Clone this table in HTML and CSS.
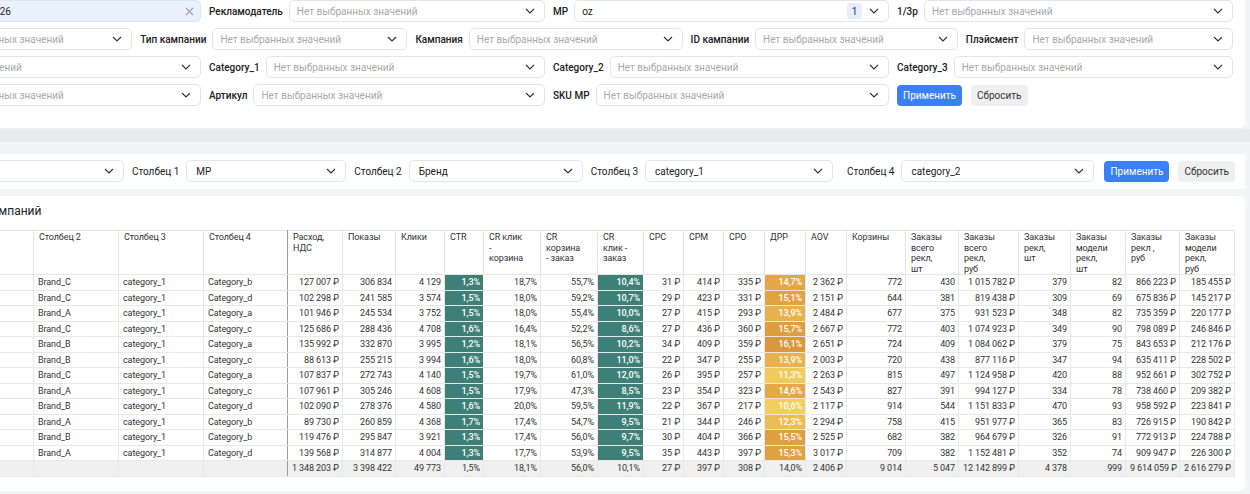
FILE: index.html
```html
<!DOCTYPE html>
<html lang="ru">
<head>
<meta charset="utf-8">
<title>Отчёт</title>
<link rel="stylesheet" href="styles.css">
</head>
<body>
<div class="page">
  <section class="panel filters">
    <div class="frow cols4">
      <div class="field"><span class="lbl lw45">Период</span><div class="sel sel-active"><span class="val">01.01 – 31.01.2026</span><svg class="clear" width="9" height="9" viewBox="0 0 9 9"><path d="M1 1l7 7M8 1L1 8" stroke="#9aa0a6" stroke-width="1.1" fill="none"/></svg></div></div>
      <div class="field"><span class="lbl">Рекламодатель</span><div class="sel"><span class="ph">Нет выбранных значений</span><svg class="chev" width="10" height="6" viewBox="0 0 10 6"><path d="M1 1l4 4 4-4" fill="none" stroke="#333" stroke-width="1.2"/></svg></div></div>
      <div class="field"><span class="lbl">МР</span><div class="sel"><span class="val">oz</span><span class="badge">1</span><svg class="chev chev-b" width="10" height="6" viewBox="0 0 10 6"><path d="M1 1l4 4 4-4" fill="none" stroke="#333" stroke-width="1.2"/></svg></div></div>
      <div class="field"><span class="lbl">1/3р</span><div class="sel"><span class="ph">Нет выбранных значений</span><svg class="chev" width="10" height="6" viewBox="0 0 10 6"><path d="M1 1l4 4 4-4" fill="none" stroke="#333" stroke-width="1.2"/></svg></div></div>
    </div>
    <div class="frow cols5">
      <div class="field"><span class="lbl lw64">Аккаунт</span><div class="sel"><span class="ph">Нет выбранных значений</span><svg class="chev" width="10" height="6" viewBox="0 0 10 6"><path d="M1 1l4 4 4-4" fill="none" stroke="#333" stroke-width="1.2"/></svg></div></div>
      <div class="field"><span class="lbl">Тип кампании</span><div class="sel"><span class="ph">Нет выбранных значений</span><svg class="chev" width="10" height="6" viewBox="0 0 10 6"><path d="M1 1l4 4 4-4" fill="none" stroke="#333" stroke-width="1.2"/></svg></div></div>
      <div class="field"><span class="lbl">Кампания</span><div class="sel"><span class="ph">Нет выбранных значений</span><svg class="chev" width="10" height="6" viewBox="0 0 10 6"><path d="M1 1l4 4 4-4" fill="none" stroke="#333" stroke-width="1.2"/></svg></div></div>
      <div class="field"><span class="lbl">ID кампании</span><div class="sel"><span class="ph">Нет выбранных значений</span><svg class="chev" width="10" height="6" viewBox="0 0 10 6"><path d="M1 1l4 4 4-4" fill="none" stroke="#333" stroke-width="1.2"/></svg></div></div>
      <div class="field"><span class="lbl">Плэйсмент</span><div class="sel"><span class="ph">Нет выбранных значений</span><svg class="chev" width="10" height="6" viewBox="0 0 10 6"><path d="M1 1l4 4 4-4" fill="none" stroke="#333" stroke-width="1.2"/></svg></div></div>
    </div>
    <div class="frow cols4">
      <div class="field"><span class="lbl lw22">Тег</span><div class="sel"><span class="ph">Нет выбранных значений</span><svg class="chev" width="10" height="6" viewBox="0 0 10 6"><path d="M1 1l4 4 4-4" fill="none" stroke="#333" stroke-width="1.2"/></svg></div></div>
      <div class="field"><span class="lbl">Category_1</span><div class="sel"><span class="ph">Нет выбранных значений</span><svg class="chev" width="10" height="6" viewBox="0 0 10 6"><path d="M1 1l4 4 4-4" fill="none" stroke="#333" stroke-width="1.2"/></svg></div></div>
      <div class="field"><span class="lbl">Category_2</span><div class="sel"><span class="ph">Нет выбранных значений</span><svg class="chev" width="10" height="6" viewBox="0 0 10 6"><path d="M1 1l4 4 4-4" fill="none" stroke="#333" stroke-width="1.2"/></svg></div></div>
      <div class="field"><span class="lbl">Category_3</span><div class="sel"><span class="ph">Нет выбранных значений</span><svg class="chev" width="10" height="6" viewBox="0 0 10 6"><path d="M1 1l4 4 4-4" fill="none" stroke="#333" stroke-width="1.2"/></svg></div></div>
    </div>
    <div class="frow cols4">
      <div class="field"><span class="lbl lw64">Оплата</span><div class="sel"><span class="ph">Нет выбранных значений</span><svg class="chev" width="10" height="6" viewBox="0 0 10 6"><path d="M1 1l4 4 4-4" fill="none" stroke="#333" stroke-width="1.2"/></svg></div></div>
      <div class="field"><span class="lbl">Артикул</span><div class="sel"><span class="ph">Нет выбранных значений</span><svg class="chev" width="10" height="6" viewBox="0 0 10 6"><path d="M1 1l4 4 4-4" fill="none" stroke="#333" stroke-width="1.2"/></svg></div></div>
      <div class="field"><span class="lbl">SKU MP</span><div class="sel"><span class="ph">Нет выбранных значений</span><svg class="chev" width="10" height="6" viewBox="0 0 10 6"><path d="M1 1l4 4 4-4" fill="none" stroke="#333" stroke-width="1.2"/></svg></div></div>
      <div class="field"><button class="btn btn-primary">Применить</button><button class="btn btn-secondary">Сбросить</button></div>
    </div>
  </section>

  <div class="band"></div>

  <section class="panel groupbar">
    <div class="gfield g0"><span class="glbl">Строки</span><div class="sel"><span class="val">Неделя</span><svg class="chev" width="10" height="6" viewBox="0 0 10 6"><path d="M1 1l4 4 4-4" fill="none" stroke="#333" stroke-width="1.2"/></svg></div></div>
    <div class="gfield"><span class="glbl">Столбец 1</span><div class="sel w1"><span class="val">МР</span><svg class="chev" width="10" height="6" viewBox="0 0 10 6"><path d="M1 1l4 4 4-4" fill="none" stroke="#333" stroke-width="1.2"/></svg></div></div>
    <div class="gfield"><span class="glbl">Столбец 2</span><div class="sel w2"><span class="val">Бренд</span><svg class="chev" width="10" height="6" viewBox="0 0 10 6"><path d="M1 1l4 4 4-4" fill="none" stroke="#333" stroke-width="1.2"/></svg></div></div>
    <div class="gfield"><span class="glbl">Столбец 3</span><div class="sel w3"><span class="val">category_1</span><svg class="chev" width="10" height="6" viewBox="0 0 10 6"><path d="M1 1l4 4 4-4" fill="none" stroke="#333" stroke-width="1.2"/></svg></div></div>
    <div class="gfield g4"><span class="glbl">Столбец 4</span><div class="sel w4"><span class="val">category_2</span><svg class="chev" width="10" height="6" viewBox="0 0 10 6"><path d="M1 1l4 4 4-4" fill="none" stroke="#333" stroke-width="1.2"/></svg></div></div>
    <div class="gbtns"><button class="btn btn-primary">Применить</button><button class="btn btn-secondary">Сбросить</button></div>
  </section>

  <section class="panel report">
    <h2 class="title">Анализ рекламных кампаний</h2>
    <table class="grid">
      <colgroup>
        <col class="c0"><col class="c85"><col class="c85"><col class="c84">
        <col class="c55"><col class="c53"><col class="c49"><col class="c39"><col class="c57"><col class="c57"><col class="c46">
        <col class="c40"><col class="c40"><col class="c41"><col class="c41"><col class="c41"><col class="c59">
        <col class="c53"><col class="c60"><col class="c52"><col class="c55"><col class="c54"><col class="c55">
      </colgroup>
      <thead>
        <tr>
          <th>Столбец 1</th><th>Столбец 2</th><th>Столбец 3</th><th class="pin">Столбец 4</th>
          <th>Расход,<br>НДС</th><th>Показы</th><th>Клики</th><th>CTR</th>
          <th>CR клик<br>-<br>корзина</th><th>CR<br>корзина<br>- заказ</th><th>CR<br>клик -<br>заказ</th>
          <th>CPC</th><th>CPM</th><th>CPO</th><th>ДРР</th><th>AOV</th><th>Корзины</th>
          <th>Заказы<br>всего<br>рекл,<br>шт</th><th>Заказы<br>всего<br>рекл,<br>руб</th><th>Заказы<br>рекл,<br>шт</th>
          <th>Заказы<br>модели<br>рекл,<br>шт</th><th>Заказы<br>рекл ,<br>руб</th><th>Заказы<br>модели<br>рекл,<br>руб</th>
        </tr>
      </thead>
      <tbody>
        <tr><td class="t">oz</td><td class="t">Brand_C</td><td class="t">category_1</td><td class="t pin">Category_b</td><td>127 007 ₽</td><td>306 834</td><td>4 129</td><td class="hl">1,3%</td><td>18,7%</td><td>55,7%</td><td class="hl">10,4%</td><td>31 ₽</td><td>414 ₽</td><td>335 ₽</td><td class="hw" style="background:#e3a845">14,7%</td><td>2 362 ₽</td><td>772</td><td>430</td><td>1 015 782 ₽</td><td>379</td><td>82</td><td>866 223 ₽</td><td>185 455 ₽</td></tr>
        <tr><td class="t">oz</td><td class="t">Brand_C</td><td class="t">category_1</td><td class="t pin">Category_d</td><td>102 298 ₽</td><td>241 585</td><td>3 574</td><td class="hl">1,5%</td><td>18,0%</td><td>59,2%</td><td class="hl">10,7%</td><td>29 ₽</td><td>423 ₽</td><td>331 ₽</td><td class="hw" style="background:#e1a342">15,1%</td><td>2 151 ₽</td><td>644</td><td>381</td><td>819 438 ₽</td><td>309</td><td>69</td><td>675 836 ₽</td><td>145 217 ₽</td></tr>
        <tr><td class="t">oz</td><td class="t">Brand_A</td><td class="t">category_1</td><td class="t pin">Category_a</td><td>101 946 ₽</td><td>245 534</td><td>3 752</td><td class="hl">1,5%</td><td>18,0%</td><td>55,4%</td><td class="hl">10,0%</td><td>27 ₽</td><td>415 ₽</td><td>293 ₽</td><td class="hw" style="background:#e7b24b">13,9%</td><td>2 484 ₽</td><td>677</td><td>375</td><td>931 523 ₽</td><td>348</td><td>82</td><td>735 359 ₽</td><td>220 177 ₽</td></tr>
        <tr><td class="t">oz</td><td class="t">Brand_C</td><td class="t">category_1</td><td class="t pin">Category_c</td><td>125 686 ₽</td><td>288 436</td><td>4 708</td><td class="hl">1,6%</td><td>16,4%</td><td>52,2%</td><td class="hl">8,6%</td><td>27 ₽</td><td>436 ₽</td><td>360 ₽</td><td class="hw" style="background:#de9d3f">15,7%</td><td>2 667 ₽</td><td>772</td><td>403</td><td>1 074 923 ₽</td><td>349</td><td>90</td><td>798 089 ₽</td><td>246 846 ₽</td></tr>
        <tr><td class="t">oz</td><td class="t">Brand_B</td><td class="t">category_1</td><td class="t pin">Category_a</td><td>135 992 ₽</td><td>332 870</td><td>3 995</td><td class="hl">1,2%</td><td>18,1%</td><td>56,5%</td><td class="hl">10,2%</td><td>34 ₽</td><td>409 ₽</td><td>359 ₽</td><td class="hw" style="background:#db973c">16,1%</td><td>2 651 ₽</td><td>724</td><td>409</td><td>1 084 062 ₽</td><td>379</td><td>75</td><td>843 653 ₽</td><td>212 176 ₽</td></tr>
        <tr><td class="t">oz</td><td class="t">Brand_B</td><td class="t">category_1</td><td class="t pin">Category_c</td><td>88 613 ₽</td><td>255 215</td><td>3 994</td><td class="hl">1,6%</td><td>18,0%</td><td>60,8%</td><td class="hl">11,0%</td><td>22 ₽</td><td>347 ₽</td><td>255 ₽</td><td class="hw" style="background:#e7b24b">13,9%</td><td>2 003 ₽</td><td>720</td><td>438</td><td>877 116 ₽</td><td>347</td><td>94</td><td>635 411 ₽</td><td>228 502 ₽</td></tr>
        <tr><td class="t">oz</td><td class="t">Brand_C</td><td class="t">category_1</td><td class="t pin">Category_a</td><td>107 837 ₽</td><td>272 743</td><td>4 140</td><td class="hl">1,5%</td><td>19,7%</td><td>61,0%</td><td class="hl">12,0%</td><td>26 ₽</td><td>395 ₽</td><td>257 ₽</td><td class="hw" style="background:#f0ca5a">11,3%</td><td>2 263 ₽</td><td>815</td><td>497</td><td>1 124 958 ₽</td><td>420</td><td>88</td><td>952 661 ₽</td><td>302 752 ₽</td></tr>
        <tr><td class="t">oz</td><td class="t">Brand_A</td><td class="t">category_1</td><td class="t pin">Category_c</td><td>107 961 ₽</td><td>305 246</td><td>4 608</td><td class="hl">1,5%</td><td>17,9%</td><td>47,3%</td><td class="hl">8,5%</td><td>23 ₽</td><td>354 ₽</td><td>323 ₽</td><td class="hw" style="background:#e3a946">14,6%</td><td>2 543 ₽</td><td>827</td><td>391</td><td>994 127 ₽</td><td>334</td><td>78</td><td>738 460 ₽</td><td>209 382 ₽</td></tr>
        <tr><td class="t">oz</td><td class="t">Brand_B</td><td class="t">category_1</td><td class="t pin">Category_d</td><td>102 090 ₽</td><td>278 376</td><td>4 580</td><td class="hl">1,6%</td><td>20,0%</td><td>59,5%</td><td class="hl">11,9%</td><td>22 ₽</td><td>367 ₽</td><td>217 ₽</td><td class="hw" style="background:#f1cf5e">10,6%</td><td>2 117 ₽</td><td>914</td><td>544</td><td>1 151 833 ₽</td><td>470</td><td>93</td><td>958 592 ₽</td><td>223 841 ₽</td></tr>
        <tr><td class="t">oz</td><td class="t">Brand_A</td><td class="t">category_1</td><td class="t pin">Category_b</td><td>89 730 ₽</td><td>260 859</td><td>4 368</td><td class="hl">1,7%</td><td>17,4%</td><td>54,7%</td><td class="hl">9,5%</td><td>21 ₽</td><td>344 ₽</td><td>246 ₽</td><td class="hw" style="background:#ecbe52">12,3%</td><td>2 294 ₽</td><td>758</td><td>415</td><td>951 977 ₽</td><td>365</td><td>83</td><td>726 915 ₽</td><td>190 842 ₽</td></tr>
        <tr><td class="t">oz</td><td class="t">Brand_B</td><td class="t">category_1</td><td class="t pin">Category_b</td><td>119 476 ₽</td><td>295 847</td><td>3 921</td><td class="hl">1,3%</td><td>17,4%</td><td>56,0%</td><td class="hl">9,7%</td><td>30 ₽</td><td>404 ₽</td><td>366 ₽</td><td class="hw" style="background:#df9f40">15,5%</td><td>2 525 ₽</td><td>682</td><td>382</td><td>964 679 ₽</td><td>326</td><td>91</td><td>772 913 ₽</td><td>224 788 ₽</td></tr>
        <tr><td class="t">oz</td><td class="t">Brand_A</td><td class="t">category_1</td><td class="t pin">Category_d</td><td>139 568 ₽</td><td>314 877</td><td>4 004</td><td class="hl">1,3%</td><td>17,7%</td><td>53,9%</td><td class="hl">9,5%</td><td>35 ₽</td><td>443 ₽</td><td>397 ₽</td><td class="hw" style="background:#e0a141">15,3%</td><td>3 017 ₽</td><td>709</td><td>382</td><td>1 152 481 ₽</td><td>352</td><td>74</td><td>909 947 ₽</td><td>226 300 ₽</td></tr>
      </tbody>
      <tfoot>
        <tr><td></td><td></td><td></td><td class="pin"></td><td>1 348 203 ₽</td><td>3 398 422</td><td>49 773</td><td>1,5%</td><td>18,1%</td><td>56,0%</td><td>10,1%</td><td>27 ₽</td><td>397 ₽</td><td>308 ₽</td><td>14,0%</td><td>2 406 ₽</td><td>9 014</td><td>5 047</td><td>12 142 899 ₽</td><td>4 378</td><td>999</td><td>9 614 059 ₽</td><td>2 616 279 ₽</td></tr>
      </tfoot>
    </table>
  </section>
</div>
</body>
</html>
```

FILE: styles.css
```css
* { box-sizing: border-box; }

html, body {
  margin: 0;
  padding: 0;
}

body {
  width: 1250px;
  height: 494px;
  overflow: hidden;
  background: #f3f4f6;
  font-family: Roboto, "Noto Sans", sans-serif;
  color: #222;
}

.page {
  margin-left: -147px;
  width: 1392px;
}

.panel {
  background: #fff;
  border-radius: 6px;
}

/* ---------- Filters ---------- */
.filters {
  margin-top: -10px;
  padding: 10px 12px 22px;
  display: flex;
  flex-direction: column;
  gap: 6px;
  border-bottom: 1px solid #eceef1;
}

.frow {
  display: grid;
  column-gap: 8px;
}

.cols4 { grid-template-columns: repeat(4, 1fr); }
.cols5 { grid-template-columns: repeat(5, 1fr); }

.field {
  display: flex;
  align-items: center;
  gap: 6px;
  min-width: 0;
}

.lbl {
  font-size: 10px;
  font-weight: 500;
  white-space: nowrap;
  color: #222;
  flex: none;
}

.lw22 { width: 22px; }
.lw45 { width: 45px; }
.lw64 { width: 64px; }

.sel {
  flex: 1;
  min-width: 0;
  height: 22px;
  border: 1px solid #e4e4e4;
  border-radius: 5px;
  display: flex;
  align-items: center;
  padding: 0 9px 0 7px;
  font-size: 10px;
  background: #fff;
}

.sel-active {
  background: #e9f1fd;
  border-color: #dbe6f8;
  padding-right: 6px;
}

.ph {
  color: #a9a9a9;
  white-space: nowrap;
  overflow: hidden;
}

.val {
  color: #222;
  white-space: nowrap;
  overflow: hidden;
}

.chev {
  margin-left: auto;
  flex: none;
}

.chev-b { margin-left: 7px; }

.clear {
  margin-left: auto;
  flex: none;
}

.badge {
  margin-left: auto;
  background: #e6eefb;
  color: #333;
  border-radius: 3px;
  font-size: 10px;
  height: 16px;
  min-width: 15px;
  padding: 0 4px;
  display: flex;
  align-items: center;
  justify-content: center;
}

.btn {
  font-family: Roboto, "Noto Sans", sans-serif;
  font-size: 10px;
  height: 21px;
  border: none;
  border-radius: 4px;
  padding: 0 6px;
  cursor: pointer;
  flex: none;
}

.btn-primary {
  background: #3b7ff5;
  color: #fff;
}

.btn-secondary {
  background: #efefef;
  color: #333;
  margin-left: 3px;
}

/* ---------- Band ---------- */
.band {
  height: 13px;
  background: #e8eaed;
  margin-right: -10px;
}

/* ---------- Grouping bar ---------- */
.groupbar {
  margin-top: 12px;
  padding: 6px 10px 7px 12px;
  display: flex;
  align-items: center;
  gap: 8px;
  border-radius: 0;
}

.gfield {
  display: flex;
  align-items: center;
  gap: 7px;
}

.g0 { flex: 1; min-width: 0; }
.g0 .sel { flex: 1; }
.g4 { margin-left: 6px; }

.glbl {
  font-size: 10px;
  color: #222;
  white-space: nowrap;
}

.sel.w1 { flex: none; width: 160px; }
.sel.w2 { flex: none; width: 174px; }
.sel.w3 { flex: none; width: 188px; }
.sel.w4 { flex: none; width: 193px; }

.groupbar .val { padding-left: 2px; }

.gbtns {
  display: flex;
  gap: 6px;
  margin-left: 2px;
}

/* ---------- Report ---------- */
.report {
  margin-top: 7px;
  padding: 8px 12px 14px;
  height: 295px;
}

.title {
  margin: 0 0 11px;
  padding-left: 9px;
  font-size: 12px;
  font-weight: 400;
  line-height: 15px;
  color: #222;
}

.grid {
  table-layout: fixed;
  border-collapse: collapse;
  width: 1369px;
  font-family: Roboto, "Noto Sans", sans-serif;
  font-size: 9px;
  letter-spacing: -0.1px;
  color: #333;
}

.c0 { width: 168px; }
.c39 { width: 39px; }
.c40 { width: 40px; }
.c41 { width: 41px; }
.c46 { width: 46px; }
.c49 { width: 49px; }
.c52 { width: 52px; }
.c53 { width: 53px; }
.c54 { width: 54px; }
.c55 { width: 55px; }
.c57 { width: 57px; }
.c59 { width: 59px; }
.c60 { width: 60px; }
.c84 { width: 84px; }
.c85 { width: 85px; }

.grid th {
  height: 44px;
  vertical-align: top;
  text-align: left;
  font-weight: 400;
  line-height: 10.6px;
  padding: 1px 3px 0 5px;
  border: 1px solid #e6e6e6;
  white-space: nowrap;
  overflow: hidden;
}

.grid td {
  height: 15.5px;
  line-height: 13px;
  padding: 0 3px 0 4px;
  text-align: right;
  border: 1px solid #e8e8e8;
  white-space: nowrap;
  overflow: hidden;
}

.grid td.t { text-align: left; }

.grid .pin { border-right: 1px solid #9c9c9c; }

.grid td.hl {
  background: #3e8078;
  color: #fff;
  border-color: #e8e8e8 #fff;
  font-weight: 500;
}

.grid td.hw {
  color: #fff;
  font-weight: 500;
}

.grid tfoot td {
  background: #f0f0f0;
  height: 16px;
}
```
